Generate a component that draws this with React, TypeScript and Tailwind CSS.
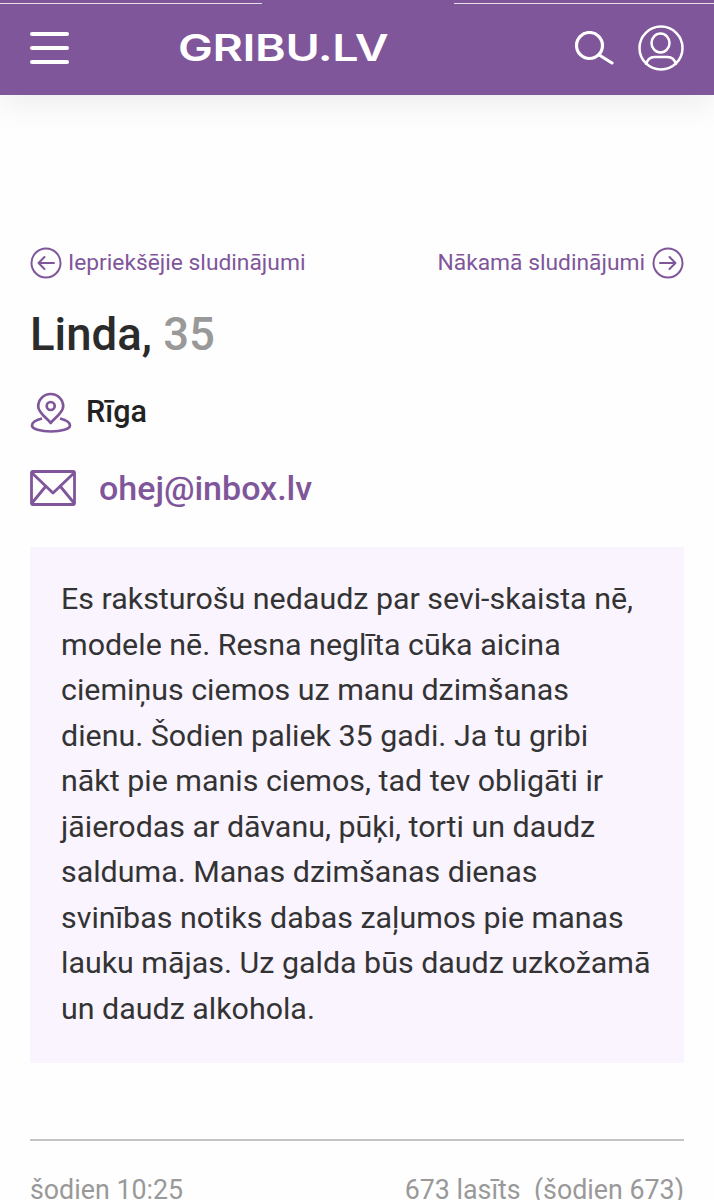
const PURPLE = '#80569b';

function ArrowCircle({ dir }: { dir: 'left' | 'right' }) {
  return (
    <svg width="32" height="32" viewBox="0 0 32 32" fill="none" stroke={PURPLE} strokeWidth="2" strokeLinecap="round" strokeLinejoin="round" className="shrink-0">
      <circle cx="16" cy="16" r="14.5" />
      {dir === 'left' ? <path d="M24 16H8.500M14.500 10l-6 6 6 6" /> : <path d="M8 16h15.500M17.500 10l6 6-6 6" />}
    </svg>
  );
}

function PinIcon() {
  return (
    <svg width="42" height="42" viewBox="0 0 42 42" fill="none" stroke={PURPLE} strokeWidth="2.700" strokeLinejoin="round" className="shrink-0">
      <path d="M20.700 32C18 28 8.200 22 8.200 15.500a12.500 12.500 0 0 1 25 0C33.200 22 23.400 28 20.700 32z" />
      <circle cx="20.700" cy="15" r="4" />
      <path d="M12 27.500C6 29 2 31 2 34.500c0 3.500 8.500 6 19 6s19-2.500 19-6c0-3.500-4-5.500-10-7" />
    </svg>
  );
}

function MailIcon() {
  return (
    <svg width="46" height="36" viewBox="0 0 46 36" fill="none" stroke={PURPLE} strokeWidth="2.800" strokeLinejoin="round" strokeLinecap="round" className="shrink-0">
      <rect x="1.500" y="1.500" width="43" height="33" rx="1.500" />
      <path d="M2 3l21 20L44 3M2 33l14-17M44 33L30 16" />
    </svg>
  );
}

function SearchIcon() {
  return (
    <svg width="40" height="34" viewBox="0 0 40 34" fill="none" stroke="#fff" strokeWidth="3.200" strokeLinecap="round" className="shrink-0">
      <circle cx="15.500" cy="14.500" r="13" />
      <path d="M26 24.500L38 32" />
    </svg>
  );
}

function UserIcon() {
  return (
    <svg width="46" height="46" viewBox="0 0 46 46" fill="none" stroke="#fff" strokeWidth="2.500" className="shrink-0">
      <circle cx="23" cy="23" r="21.500" />
      <ellipse cx="22.500" cy="18" rx="9" ry="9.500" />
      <path d="M8 40c1-5 4-8 8.500-8h13c4.500 0 7.500 3 8.500 8" />
    </svg>
  );
}

export default function App() {
  return (
    <div className="h-[1200px] overflow-hidden bg-[#fefefe] font-['Roboto',sans-serif]">
      <header className="relative flex h-[95px] items-center justify-between bg-[#80569b] px-[30px] shadow-[0_10px_30px_rgba(0,0,0,0.07)]">
        <div className="absolute left-0 top-[3px] h-px w-[262px] bg-white/80" />
        <div className="absolute right-0 top-[3px] h-px w-[260px] bg-white/80" />
        <div className="flex w-[39px] flex-col gap-[10px]">
          <div className="h-1 rounded-full bg-white" />
          <div className="h-1 rounded-full bg-white" />
          <div className="h-1 rounded-full bg-white" />
        </div>
        <div className="absolute left-[178px] top-[26px] origin-left scale-x-[1.26] font-['Inter',sans-serif] text-[37px] font-semibold leading-[44px] tracking-[-0.3px] text-white">GRIBU.LV</div>
        <div className="flex items-center gap-[24px]">
          <SearchIcon />
          <UserIcon />
        </div>
      </header>

      <main className="px-[30px] pt-[152px]">
        <nav className="flex items-center justify-between text-[22.800px] leading-8 text-[#80569b]">
          <a className="flex items-center gap-[6px]"><ArrowCircle dir="left" />Iepriekšējie sludinājumi</a>
          <a className="flex items-center gap-[7px]">Nākamā sludinājumi<ArrowCircle dir="right" /></a>
        </nav>

        <h1 className="mt-[29px] text-[45.500px] font-medium leading-[54px] text-[#2b2b2b]">
          Linda, <span className="text-[#999]">35</span>
        </h1>

        <div className="mt-[29px] flex items-center gap-[14px] text-[30.500px] font-medium leading-[42px] text-[#222]">
          <PinIcon />
          Rīga
        </div>

        <a className="mt-[34px] flex items-center gap-[23px] text-[34px] font-medium leading-[42px] text-[#80569b]">
          <MailIcon />
          ohej@inbox.lv
        </a>

        <section className="mt-[38px] bg-[#faf4ff] pb-[32px] pl-[31px] pr-[30px] pt-[29px] text-[30.400px] leading-[45.500px] text-[#333]">
          Es raksturošu nedaudz par sevi-skaista nē, modele nē. Resna neglīta cūka aicina ciemiņus ciemos uz manu dzimšanas dienu. Šodien paliek 35 gadi. Ja tu gribi nākt pie manis ciemos, tad tev obligāti ir jāierodas ar dāvanu, pūķi, torti un daudz salduma. Manas dzimšanas dienas svinības notiks dabas zaļumos pie manas lauku mājas. Uz galda būs daudz uzkožamā un daudz alkohola.
        </section>

        <div className="mt-[76px] flex justify-between border-t-2 border-[#c4c4c4] pt-[31px] text-[26.800px] leading-[36px] text-[#999]">
          <span>šodien 10:25</span>
          <span className="whitespace-pre">673 lasīts  (šodien 673)</span>
        </div>
      </main>
    </div>
  );
}
